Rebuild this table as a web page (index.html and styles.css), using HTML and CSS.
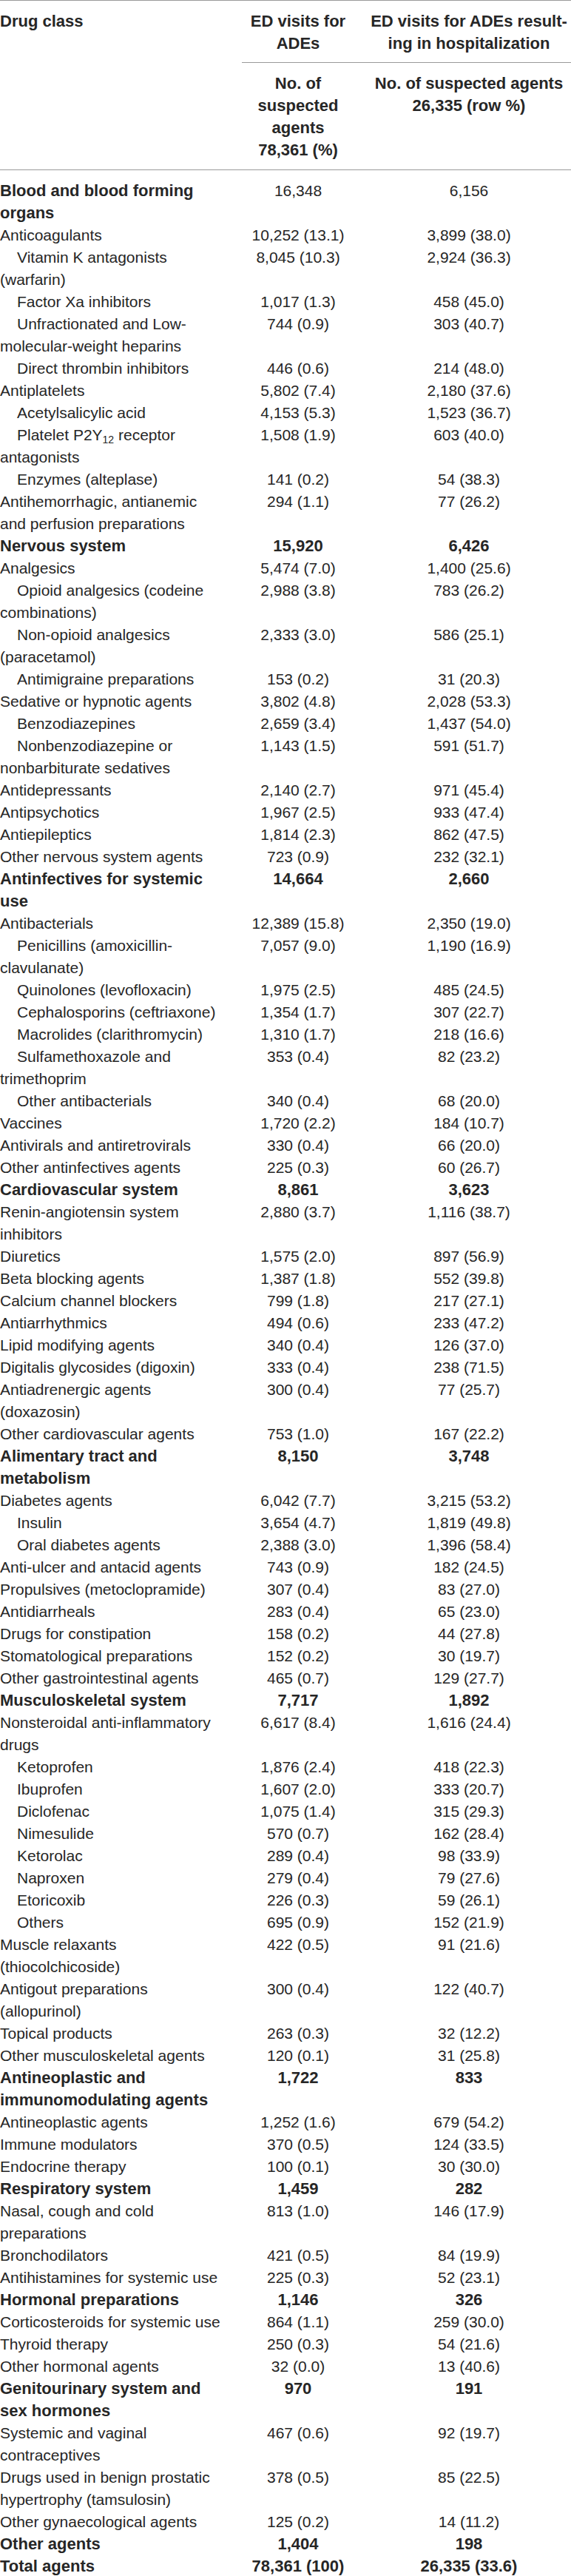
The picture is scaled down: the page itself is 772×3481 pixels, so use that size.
FILE: index.html
```html
<!DOCTYPE html>
<html lang="en">
<head>
    <meta charset="UTF-8">
    <title>ED visits for ADEs by drug class</title>
    <link rel="stylesheet" href="styles.css">
</head>
<body>
    <table class="ade-table">
        <colgroup>
            <col class="col-class">
            <col class="col-visits">
            <col class="col-hosp">
        </colgroup>
        <thead>
            <tr class="head-top">
                <th rowspan="2" class="label">Drug class</th>
                <th class="group">ED visits for<br>ADEs</th>
                <th class="group hosp">ED visits for ADEs result-<br>ing in hospitalization</th>
            </tr>
            <tr class="head-sub">
                <th>No. of<br>suspected<br>agents<br>78,361 (%)</th>
                <th class="hosp">No. of suspected agents<br>26,335 (row %)</th>
            </tr>
        </thead>
        <tbody>
            <!-- Blood -->
            <tr class="first"><td class="label strong">Blood and blood forming<br>organs</td><td>16,348</td><td class="hosp">6,156</td></tr>
            <tr><td class="label">Anticoagulants</td><td>10,252 (13.1)</td><td class="hosp">3,899 (38.0)</td></tr>
            <tr><td class="label sub">Vitamin K antagonists<br>(warfarin)</td><td>8,045 (10.3)</td><td class="hosp">2,924 (36.3)</td></tr>
            <tr><td class="label sub">Factor Xa inhibitors</td><td>1,017 (1.3)</td><td class="hosp">458 (45.0)</td></tr>
            <tr><td class="label sub">Unfractionated and Low-<br>molecular-weight heparins</td><td>744 (0.9)</td><td class="hosp">303 (40.7)</td></tr>
            <tr><td class="label sub">Direct thrombin inhibitors</td><td>446 (0.6)</td><td class="hosp">214 (48.0)</td></tr>
            <tr><td class="label">Antiplatelets</td><td>5,802 (7.4)</td><td class="hosp">2,180 (37.6)</td></tr>
            <tr><td class="label sub">Acetylsalicylic acid</td><td>4,153 (5.3)</td><td class="hosp">1,523 (36.7)</td></tr>
            <tr><td class="label sub">Platelet P2Y<sub>12</sub> receptor<br>antagonists</td><td>1,508 (1.9)</td><td class="hosp">603 (40.0)</td></tr>
            <tr><td class="label sub">Enzymes (alteplase)</td><td>141 (0.2)</td><td class="hosp">54 (38.3)</td></tr>
            <tr><td class="label">Antihemorrhagic, antianemic<br>and perfusion preparations</td><td>294 (1.1)</td><td class="hosp">77 (26.2)</td></tr>

            <!-- Nervous -->
            <tr class="group-row"><td class="label">Nervous system</td><td>15,920</td><td class="hosp">6,426</td></tr>
            <tr><td class="label">Analgesics</td><td>5,474 (7.0)</td><td class="hosp">1,400 (25.6)</td></tr>
            <tr><td class="label sub">Opioid analgesics (codeine<br>combinations)</td><td>2,988 (3.8)</td><td class="hosp">783 (26.2)</td></tr>
            <tr><td class="label sub">Non-opioid analgesics<br>(paracetamol)</td><td>2,333 (3.0)</td><td class="hosp">586 (25.1)</td></tr>
            <tr><td class="label sub">Antimigraine preparations</td><td>153 (0.2)</td><td class="hosp">31 (20.3)</td></tr>
            <tr><td class="label">Sedative or hypnotic agents</td><td>3,802 (4.8)</td><td class="hosp">2,028 (53.3)</td></tr>
            <tr><td class="label sub">Benzodiazepines</td><td>2,659 (3.4)</td><td class="hosp">1,437 (54.0)</td></tr>
            <tr><td class="label sub">Nonbenzodiazepine or<br>nonbarbiturate sedatives</td><td>1,143 (1.5)</td><td class="hosp">591 (51.7)</td></tr>
            <tr><td class="label">Antidepressants</td><td>2,140 (2.7)</td><td class="hosp">971 (45.4)</td></tr>
            <tr><td class="label">Antipsychotics</td><td>1,967 (2.5)</td><td class="hosp">933 (47.4)</td></tr>
            <tr><td class="label">Antiepileptics</td><td>1,814 (2.3)</td><td class="hosp">862 (47.5)</td></tr>
            <tr><td class="label">Other nervous system agents</td><td>723 (0.9)</td><td class="hosp">232 (32.1)</td></tr>

            <!-- Antinfectives -->
            <tr class="group-row"><td class="label">Antinfectives for systemic<br>use</td><td>14,664</td><td class="hosp">2,660</td></tr>
            <tr><td class="label">Antibacterials</td><td>12,389 (15.8)</td><td class="hosp">2,350 (19.0)</td></tr>
            <tr><td class="label sub">Penicillins (amoxicillin-<br>clavulanate)</td><td>7,057 (9.0)</td><td class="hosp">1,190 (16.9)</td></tr>
            <tr><td class="label sub">Quinolones (levofloxacin)</td><td>1,975 (2.5)</td><td class="hosp">485 (24.5)</td></tr>
            <tr><td class="label sub">Cephalosporins (ceftriaxone)</td><td>1,354 (1.7)</td><td class="hosp">307 (22.7)</td></tr>
            <tr><td class="label sub">Macrolides (clarithromycin)</td><td>1,310 (1.7)</td><td class="hosp">218 (16.6)</td></tr>
            <tr><td class="label sub">Sulfamethoxazole and<br>trimethoprim</td><td>353 (0.4)</td><td class="hosp">82 (23.2)</td></tr>
            <tr><td class="label sub">Other antibacterials</td><td>340 (0.4)</td><td class="hosp">68 (20.0)</td></tr>
            <tr><td class="label">Vaccines</td><td>1,720 (2.2)</td><td class="hosp">184 (10.7)</td></tr>
            <tr><td class="label">Antivirals and antiretrovirals</td><td>330 (0.4)</td><td class="hosp">66 (20.0)</td></tr>
            <tr><td class="label">Other antinfectives agents</td><td>225 (0.3)</td><td class="hosp">60 (26.7)</td></tr>

            <!-- Cardiovascular -->
            <tr class="group-row"><td class="label">Cardiovascular system</td><td>8,861</td><td class="hosp">3,623</td></tr>
            <tr><td class="label">Renin-angiotensin system<br>inhibitors</td><td>2,880 (3.7)</td><td class="hosp">1,116 (38.7)</td></tr>
            <tr><td class="label">Diuretics</td><td>1,575 (2.0)</td><td class="hosp">897 (56.9)</td></tr>
            <tr><td class="label">Beta blocking agents</td><td>1,387 (1.8)</td><td class="hosp">552 (39.8)</td></tr>
            <tr><td class="label">Calcium channel blockers</td><td>799 (1.8)</td><td class="hosp">217 (27.1)</td></tr>
            <tr><td class="label">Antiarrhythmics</td><td>494 (0.6)</td><td class="hosp">233 (47.2)</td></tr>
            <tr><td class="label">Lipid modifying agents</td><td>340 (0.4)</td><td class="hosp">126 (37.0)</td></tr>
            <tr><td class="label">Digitalis glycosides (digoxin)</td><td>333 (0.4)</td><td class="hosp">238 (71.5)</td></tr>
            <tr><td class="label">Antiadrenergic agents<br>(doxazosin)</td><td>300 (0.4)</td><td class="hosp">77 (25.7)</td></tr>
            <tr><td class="label">Other cardiovascular agents</td><td>753 (1.0)</td><td class="hosp">167 (22.2)</td></tr>

            <!-- Alimentary -->
            <tr class="group-row"><td class="label">Alimentary tract and<br>metabolism</td><td>8,150</td><td class="hosp">3,748</td></tr>
            <tr><td class="label">Diabetes agents</td><td>6,042 (7.7)</td><td class="hosp">3,215 (53.2)</td></tr>
            <tr><td class="label sub">Insulin</td><td>3,654 (4.7)</td><td class="hosp">1,819 (49.8)</td></tr>
            <tr><td class="label sub">Oral diabetes agents</td><td>2,388 (3.0)</td><td class="hosp">1,396 (58.4)</td></tr>
            <tr><td class="label">Anti-ulcer and antacid agents</td><td>743 (0.9)</td><td class="hosp">182 (24.5)</td></tr>
            <tr><td class="label">Propulsives (metoclopramide)</td><td>307 (0.4)</td><td class="hosp">83 (27.0)</td></tr>
            <tr><td class="label">Antidiarrheals</td><td>283 (0.4)</td><td class="hosp">65 (23.0)</td></tr>
            <tr><td class="label">Drugs for constipation</td><td>158 (0.2)</td><td class="hosp">44 (27.8)</td></tr>
            <tr><td class="label">Stomatological preparations</td><td>152 (0.2)</td><td class="hosp">30 (19.7)</td></tr>
            <tr><td class="label">Other gastrointestinal agents</td><td>465 (0.7)</td><td class="hosp">129 (27.7)</td></tr>

            <!-- Musculoskeletal -->
            <tr class="group-row"><td class="label">Musculoskeletal system</td><td>7,717</td><td class="hosp">1,892</td></tr>
            <tr><td class="label">Nonsteroidal anti-inflammatory<br>drugs</td><td>6,617 (8.4)</td><td class="hosp">1,616 (24.4)</td></tr>
            <tr><td class="label sub">Ketoprofen</td><td>1,876 (2.4)</td><td class="hosp">418 (22.3)</td></tr>
            <tr><td class="label sub">Ibuprofen</td><td>1,607 (2.0)</td><td class="hosp">333 (20.7)</td></tr>
            <tr><td class="label sub">Diclofenac</td><td>1,075 (1.4)</td><td class="hosp">315 (29.3)</td></tr>
            <tr><td class="label sub">Nimesulide</td><td>570 (0.7)</td><td class="hosp">162 (28.4)</td></tr>
            <tr><td class="label sub">Ketorolac</td><td>289 (0.4)</td><td class="hosp">98 (33.9)</td></tr>
            <tr><td class="label sub">Naproxen</td><td>279 (0.4)</td><td class="hosp">79 (27.6)</td></tr>
            <tr><td class="label sub">Etoricoxib</td><td>226 (0.3)</td><td class="hosp">59 (26.1)</td></tr>
            <tr><td class="label sub">Others</td><td>695 (0.9)</td><td class="hosp">152 (21.9)</td></tr>
            <tr><td class="label">Muscle relaxants<br>(thiocolchicoside)</td><td>422 (0.5)</td><td class="hosp">91 (21.6)</td></tr>
            <tr><td class="label">Antigout preparations<br>(allopurinol)</td><td>300 (0.4)</td><td class="hosp">122 (40.7)</td></tr>
            <tr><td class="label">Topical products</td><td>263 (0.3)</td><td class="hosp">32 (12.2)</td></tr>
            <tr><td class="label">Other musculoskeletal agents</td><td>120 (0.1)</td><td class="hosp">31 (25.8)</td></tr>

            <!-- Antineoplastic -->
            <tr class="group-row"><td class="label">Antineoplastic and<br>immunomodulating agents</td><td>1,722</td><td class="hosp">833</td></tr>
            <tr><td class="label">Antineoplastic agents</td><td>1,252 (1.6)</td><td class="hosp">679 (54.2)</td></tr>
            <tr><td class="label">Immune modulators</td><td>370 (0.5)</td><td class="hosp">124 (33.5)</td></tr>
            <tr><td class="label">Endocrine therapy</td><td>100 (0.1)</td><td class="hosp">30 (30.0)</td></tr>

            <!-- Respiratory -->
            <tr class="group-row"><td class="label">Respiratory system</td><td>1,459</td><td class="hosp">282</td></tr>
            <tr><td class="label">Nasal, cough and cold<br>preparations</td><td>813 (1.0)</td><td class="hosp">146 (17.9)</td></tr>
            <tr><td class="label">Bronchodilators</td><td>421 (0.5)</td><td class="hosp">84 (19.9)</td></tr>
            <tr><td class="label">Antihistamines for systemic use</td><td>225 (0.3)</td><td class="hosp">52 (23.1)</td></tr>

            <!-- Hormonal -->
            <tr class="group-row"><td class="label">Hormonal preparations</td><td>1,146</td><td class="hosp">326</td></tr>
            <tr><td class="label">Corticosteroids for systemic use</td><td>864 (1.1)</td><td class="hosp">259 (30.0)</td></tr>
            <tr><td class="label">Thyroid therapy</td><td>250 (0.3)</td><td class="hosp">54 (21.6)</td></tr>
            <tr><td class="label">Other hormonal agents</td><td>32 (0.0)</td><td class="hosp">13 (40.6)</td></tr>

            <!-- Genitourinary -->
            <tr class="group-row"><td class="label">Genitourinary system and<br>sex hormones</td><td>970</td><td class="hosp">191</td></tr>
            <tr><td class="label">Systemic and vaginal<br>contraceptives</td><td>467 (0.6)</td><td class="hosp">92 (19.7)</td></tr>
            <tr><td class="label">Drugs used in benign prostatic<br>hypertrophy (tamsulosin)</td><td>378 (0.5)</td><td class="hosp">85 (22.5)</td></tr>
            <tr><td class="label">Other gynaecological agents</td><td>125 (0.2)</td><td class="hosp">14 (11.2)</td></tr>

            <tr class="group-row"><td class="label">Other agents</td><td>1,404</td><td class="hosp">198</td></tr>
            <tr class="group-row"><td class="label">Total agents</td><td>78,361 (100)</td><td class="hosp">26,335 (33.6)</td></tr>
        </tbody>
    </table>
</body>
</html>
```

FILE: styles.css
```css
body {
    margin: 0;
    padding: 0;
    background: #fff;
    color: #262626;
    font-family: "Liberation Sans", Arial, sans-serif;
}

.ade-table {
    width: 772px;
    border-collapse: collapse;
    table-layout: fixed;
    border-top: 1px solid #9a9a9a;
    font-size: 21px;
    line-height: 30px;
}

.col-class {
    width: 327px;
}

.col-visits {
    width: 152px;
}

.col-hosp {
    width: 293px;
}

th {
    font-weight: bold;
    font-size: 22px;
    text-align: center;
    vertical-align: top;
    padding: 0;
}

th.label {
    text-align: left;
    padding-top: 13px;
    border-bottom: 1px solid #9a9a9a;
}

.head-top th.group {
    padding-top: 13px;
    padding-bottom: 10px;
    border-bottom: 1px solid #9a9a9a;
}

.head-sub th {
    padding-top: 13px;
    padding-bottom: 11px;
    border-bottom: 1px solid #9a9a9a;
}

.hosp {
    padding-left: 17px;
}

td {
    padding: 0;
    text-align: center;
    vertical-align: top;
    white-space: nowrap;
}

td.label {
    text-align: left;
}

td.sub {
    text-indent: 23px;
}

td.strong,
.group-row td {
    font-weight: bold;
    font-size: 22px;
}

tr.first td {
    padding-top: 13px;
}

sub {
    font-size: 14px;
    line-height: 0;
    vertical-align: -4px;
}
```
